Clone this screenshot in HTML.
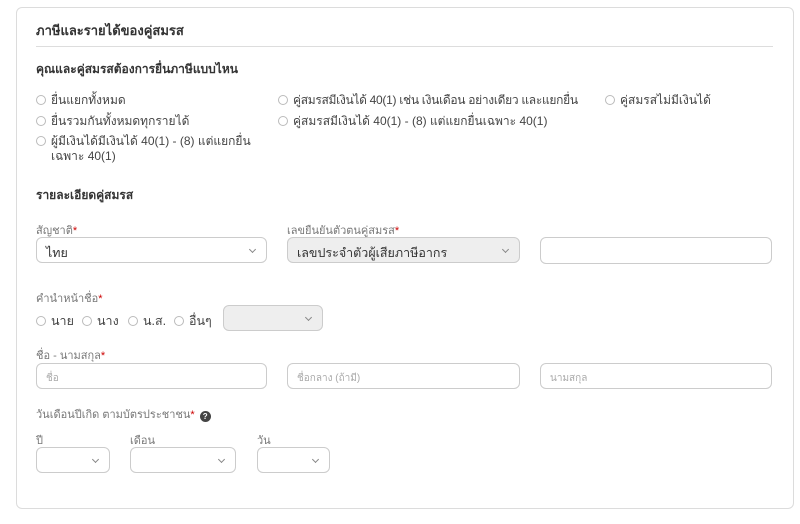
<!DOCTYPE html>
<html><head><meta charset="utf-8"><style>
*{box-sizing:border-box;margin:0;padding:0}
body{width:800px;height:524px;background:#fff;font-family:"Liberation Sans","Noto Sans CJK SC",sans-serif;color:#333;position:relative;overflow:hidden}
.card{position:absolute;left:16px;top:7px;width:778px;height:502px;border:1px solid #dcdcdc;border-radius:6px}
.a{position:absolute;white-space:nowrap}
.h{font-weight:bold;font-size:13px;color:#333}
.t{font-size:12px;color:#444}
.l{font-size:11px;color:#777}
.r{color:#c00}
.rad{display:inline-block;width:10px;height:10px;border:1px solid #bbb;border-radius:50%;vertical-align:-1px;margin-right:5px}
.box{position:absolute;height:26px;border:1px solid #ccc;border-radius:6px;background:#fff;font-size:12.5px;padding:5px 9px;color:#333}
.g{background:#eee}
.ph{color:#aaa;font-size:10px;padding-top:7px}
.chev{position:absolute;right:11px;top:9px;width:5px;height:5px;border-right:1px solid #888;border-bottom:1px solid #888;transform:rotate(45deg)}
</style></head><body>
<div class="card"></div>
<div class="a h" style="left:36px;top:20px">ภาษีและรายได้ของคู่สมรส</div>
<div class="a" style="left:36px;top:46px;width:737px;height:1px;background:#ddd"></div>
<div class="a h" style="left:36px;top:60px;font-size:12px">คุณและคู่สมรสต้องการยื่นภาษีแบบไหน</div>
<div class="a t" style="left:36px;top:91px"><span class="rad"></span>ยื่นแยกทั้งหมด</div>
<div class="a t" style="left:36px;top:112px"><span class="rad"></span>ยื่นรวมกันทั้งหมดทุกรายได้</div>
<div class="a t" style="left:36px;top:134px;white-space:normal;width:230px;line-height:15px"><span class="rad"></span>ผู้มีเงินได้มีเงินได้ 40(1) - (8) แต่แยกยื่น<br><span style="padding-left:15px">เฉพาะ 40(1)</span></div>
<div class="a t" style="left:278px;top:91px;letter-spacing:-0.3px"><span class="rad"></span>คู่สมรสมีเงินได้ 40(1) เช่น เงินเดือน อย่างเดียว และแยกยื่น</div>
<div class="a t" style="left:278px;top:112px"><span class="rad"></span>คู่สมรสมีเงินได้ 40(1) - (8) แต่แยกยื่นเฉพาะ 40(1)</div>
<div class="a t" style="left:605px;top:91px"><span class="rad"></span>คู่สมรสไม่มีเงินได้</div>
<div class="a h" style="left:36px;top:186px;font-size:12px">รายละเอียดคู่สมรส</div>
<div class="a l" style="left:36px;top:221px">สัญชาติ<span class="r">*</span></div>
<div class="a l" style="left:287px;top:221px">เลขยืนยันตัวตนคู่สมรส<span class="r">*</span></div>
<div class="box" style="left:36px;top:237px;width:231px">ไทย<span class="chev"></span></div>
<div class="box g" style="left:287px;top:237px;width:233px">เลขประจำตัวผู้เสียภาษีอากร<span class="chev"></span></div>
<div class="box" style="left:540px;top:237px;width:232px;height:27px"></div>
<div class="a l" style="left:36px;top:289px">คำนำหน้าชื่อ<span class="r">*</span></div>
<div class="a t" style="left:36px;top:311px;font-size:12.5px"><span class="rad"></span>นาย</div>
<div class="a t" style="left:82px;top:311px;font-size:12.5px"><span class="rad"></span>นาง</div>
<div class="a t" style="left:128px;top:311px;font-size:12.5px"><span class="rad"></span>น.ส.</div>
<div class="a t" style="left:174px;top:311px;font-size:12.5px"><span class="rad"></span>อื่นๆ</div>
<div class="box g" style="left:223px;top:305px;width:100px"><span class="chev"></span></div>
<div class="a l" style="left:36px;top:346px">ชื่อ - นามสกุล<span class="r">*</span></div>
<div class="box ph" style="left:36px;top:363px;width:231px">ชื่อ</div>
<div class="box ph" style="left:287px;top:363px;width:233px">ชื่อกลาง (ถ้ามี)</div>
<div class="box ph" style="left:540px;top:363px;width:232px">นามสกุล</div>
<div class="a l" style="left:36px;top:405px">วันเดือนปีเกิด ตามบัตรประชาชน<span class="r">*</span> <span style="display:inline-block;width:11px;height:11px;border-radius:50%;background:#444;color:#fff;font-size:8px;text-align:center;line-height:11px;font-weight:bold;vertical-align:-1px;margin-left:2px">?</span></div>
<div class="a l" style="left:36px;top:431px">ปี</div>
<div class="a l" style="left:130px;top:431px">เดือน</div>
<div class="a l" style="left:257px;top:431px">วัน</div>
<div class="box" style="left:36px;top:447px;width:74px"><span class="chev"></span></div>
<div class="box" style="left:130px;top:447px;width:106px"><span class="chev"></span></div>
<div class="box" style="left:257px;top:447px;width:73px"><span class="chev"></span></div>
</body></html>
